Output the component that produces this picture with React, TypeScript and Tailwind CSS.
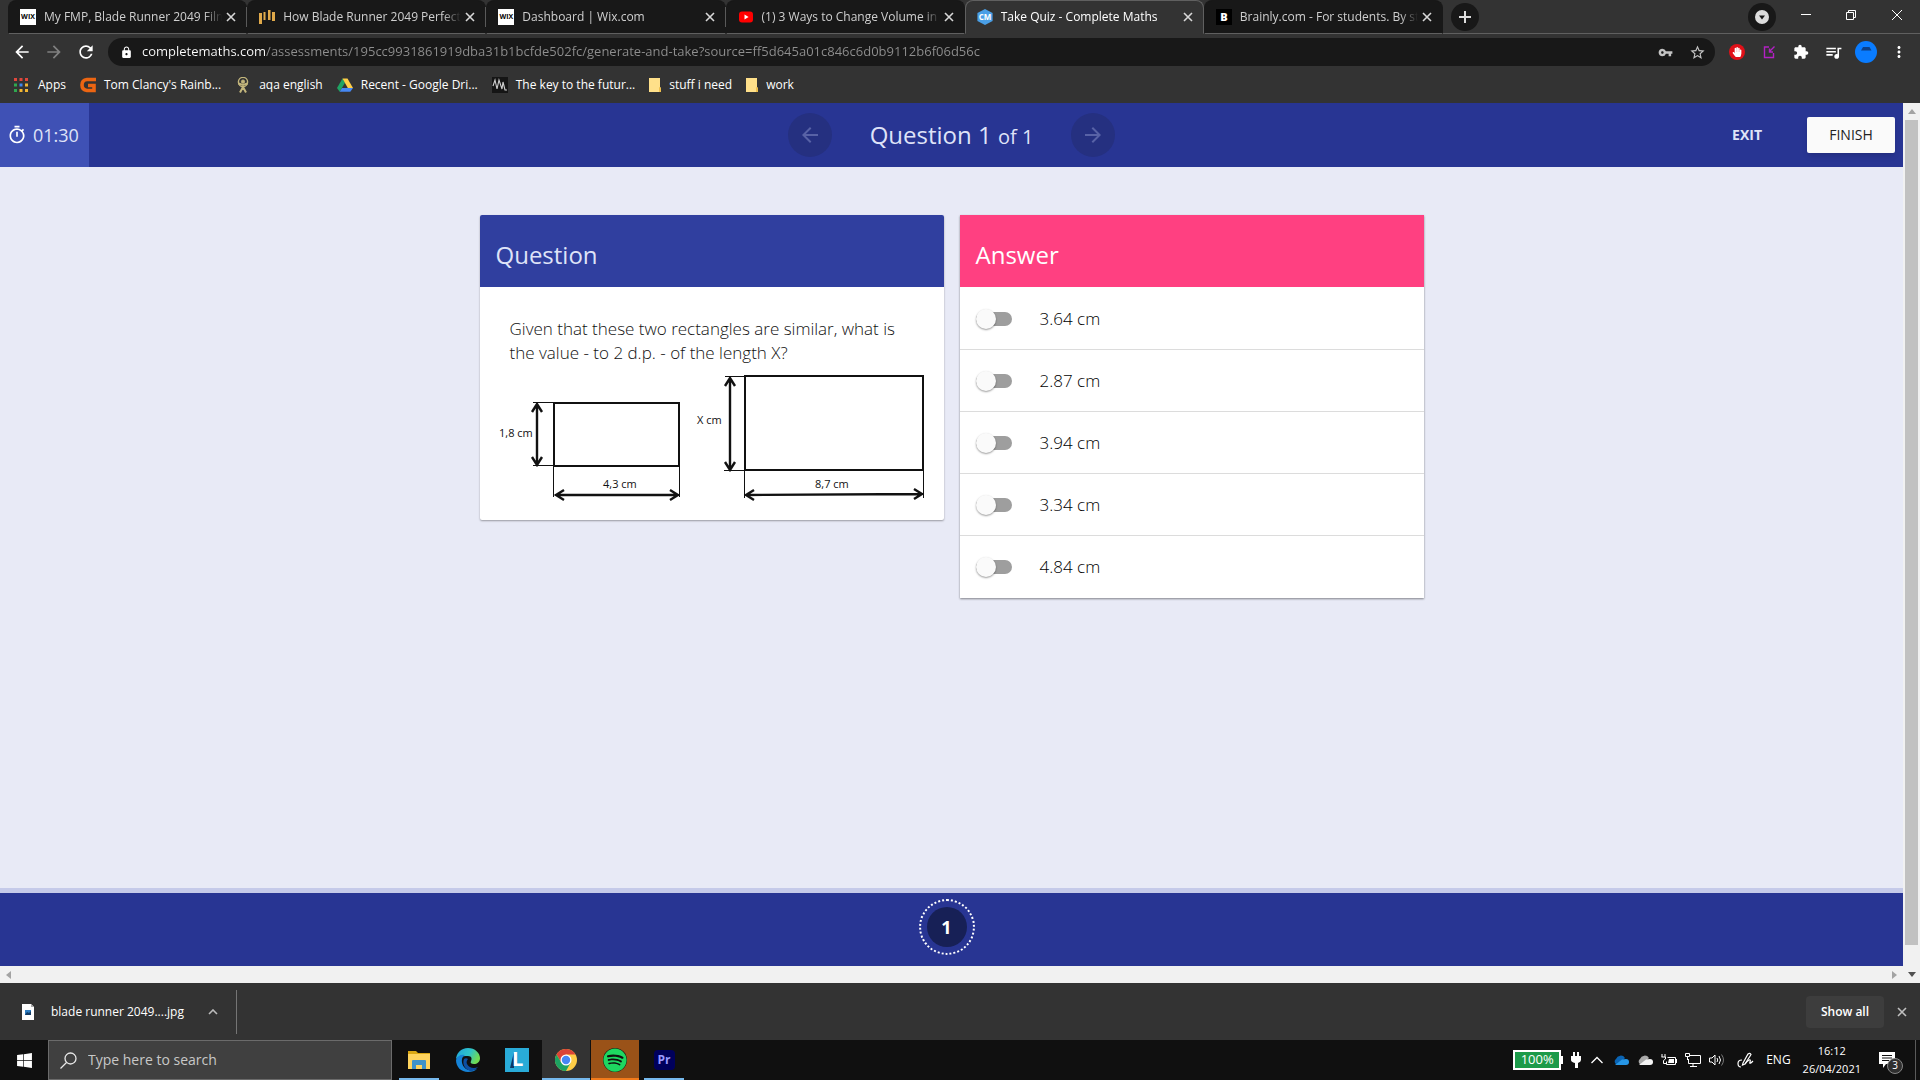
import clsx from "clsx";
import { FunctionComponent, JSX, ReactNode, useState } from "react";
import { FaHandPaper, FaSpotify, FaWindows } from "react-icons/fa";
import {
  MdArrowBack,
  MdArrowForward,
  MdExtension,
  MdLock,
  MdMoreVert,
  MdOutlineTimer,
  MdQueueMusic,
  MdRefresh,
  MdStarBorder,
  MdVpnKey,
} from "react-icons/md";

const ANSWERS = ["3.64 cm", "2.87 cm", "3.94 cm", "3.34 cm", "4.84 cm"];

const Cross: FunctionComponent<{ className?: string }> = ({
  className,
}): JSX.Element => (
  <svg
    viewBox="0 0 10 10"
    className={clsx("shrink-0", className)}
    fill="none"
    stroke="currentColor"
  >
    <path d="M1 1l8 8M9 1l-8 8" strokeWidth="1.6" />
  </svg>
);

const WixIcon = (): JSX.Element => (
  <span className="w-4 h-4 shrink-0 flex items-center justify-center bg-white text-black font-bold text-[7px]">
    WIX
  </span>
);

const BarsIcon = (): JSX.Element => (
  <svg viewBox="0 0 16 16" className="w-4 h-4 shrink-0" fill="#e0a94a">
    <path d="M0 4h3v11H0zM4.500 3h2v8h-2zM9 1h2.500v10H9zM13 3h3v9h-3z" />
  </svg>
);

const YoutubeIcon = (): JSX.Element => (
  <svg viewBox="0 0 16 16" className="w-4 h-4 shrink-0">
    <rect x="1" y="2.5" width="14" height="11" rx="3" fill="#f00" />
    <path d="M6.5 5.6v4.8L10.6 8z" fill="#fff" />
  </svg>
);

const MathsIcon = (): JSX.Element => (
  <svg viewBox="0 0 16 16" className="w-4 h-4 shrink-0">
    <path d="M8 0l7.6 4v8L8 16 .4 12V4z" fill="#4a9fe6" />
    <text
      x="8"
      y="11"
      textAnchor="middle"
      fontSize="8"
      fontWeight="700"
      fill="#fff"
      fontFamily="Open Sans, sans-serif"
    >
      CM
    </text>
  </svg>
);

const BrainlyIcon = (): JSX.Element => (
  <span className="w-4 h-4 shrink-0 flex items-center justify-center bg-black text-white font-black text-[11px]">
    B
  </span>
);

const TABS = [
  { title: "My FMP, Blade Runner 2049 Film", icon: <WixIcon /> },
  { title: "How Blade Runner 2049 Perfecte", icon: <BarsIcon /> },
  { title: "Dashboard | Wix.com", icon: <WixIcon /> },
  { title: "(1) 3 Ways to Change Volume in", icon: <YoutubeIcon /> },
  { title: "Take Quiz - Complete Maths", icon: <MathsIcon />, active: true },
  { title: "Brainly.com - For students. By stu", icon: <BrainlyIcon /> },
];

const TabStrip = (): JSX.Element => (
  <div className="w-full h-[34px] flex items-stretch bg-[#333] pl-2">
    <div className="flex min-w-0 basis-[1435px]">
      {TABS.map((tab, i) => (
        <div
          key={i}
          className={clsx(
            "flex flex-1 min-w-0 items-center rounded-t-lg pl-[11px] pr-[10px] text-xs border",
            tab.active
              ? "bg-[#333] border-[#606060] border-b-[#333] text-white"
              : "bg-[#181818] border-[#181818] border-b-[#606060] text-[#cfcfcf]"
          )}
        >
          {tab.icon}
          <span className="flex-1 min-w-0 ml-2 mr-1 overflow-hidden whitespace-nowrap [mask-image:linear-gradient(to_right,black_90%,transparent)]">
            {tab.title}
          </span>
          <button aria-label="Close tab" className="text-[#d8d8d8]">
            <Cross className="w-[10px] h-[10px]" />
          </button>
          {i < 3 && (
            <span className="w-px h-5 bg-[#5a5a5a] -mr-[11px] ml-[10px] shrink-0" />
          )}
        </div>
      ))}
    </div>
    <div className="flex flex-1 min-w-fit items-center border-b border-[#606060] text-white">
      <button
        aria-label="New tab"
        className="w-7 h-7 ml-2 rounded-full bg-[#181818] flex items-center justify-center"
      >
        <svg viewBox="0 0 12 12" className="w-3 h-3" stroke="#ddd">
          <path d="M6 0v12M0 6h12" strokeWidth="2" />
        </svg>
      </button>
      <button
        aria-label="Search tabs"
        className="w-7 h-7 ml-auto rounded-full bg-[#181818] flex items-center justify-center"
      >
        <svg viewBox="0 0 14 14" className="w-[14px] h-[14px]">
          <circle cx="7" cy="7" r="7" fill="#ddd" />
          <path d="M4 5.4h6L7 9.6z" fill="#181818" />
        </svg>
      </button>
      <button aria-label="Minimise" className="w-11 ml-2 flex justify-center pb-1">
        <span className="w-[10px] h-px bg-white" />
      </button>
      <button aria-label="Restore" className="w-[46px] flex justify-center pb-1">
        <svg viewBox="0 0 10 10" className="w-[10px] h-[10px]" fill="none" stroke="#fff">
          <path d="M.5 2.5h7v7h-7zM2.5 2.5v-2h7v7h-2" />
        </svg>
      </button>
      <button aria-label="Close" className="w-[46px] flex justify-center pb-1">
        <svg viewBox="0 0 10 10" className="w-[10px] h-[10px]" stroke="#fff">
          <path d="M0 0l10 10M10 0L0 10" />
        </svg>
      </button>
    </div>
  </div>
);

const Toolbar = (): JSX.Element => (
  <div className="w-full h-9 flex items-center bg-[#333] text-white pl-3 pr-3">
    <button aria-label="Back" className="w-8">
      <MdArrowBack size={20} />
    </button>
    <button aria-label="Forward" className="w-8 text-[#808080]">
      <MdArrowForward size={20} />
    </button>
    <button aria-label="Reload" className="w-8">
      <MdRefresh size={20} />
    </button>
    <div className="flex flex-1 min-w-0 items-center h-7 rounded-full bg-[#181818] pl-3 pr-[9px]">
      <MdLock size={13} className="shrink-0" />
      <input
        aria-label="Address"
        className="flex-1 min-w-0 ml-[9px] outline-none text-[13px] text-transparent bg-clip-text bg-[linear-gradient(to_right,#fff_124px,#8f8f8f_124px)]"
        defaultValue="completemaths.com/assessments/195cc9931861919dba31b1bcfde502fc/generate-and-take?source=ff5d645a01c846c6d0b9112b6f06d56c"
      />
      <MdVpnKey size={15} className="text-[#c4c4c4]" />
      <MdStarBorder size={17} className="ml-4 text-[#c4c4c4]" />
    </div>
    <div className="flex items-center shrink-0 ml-[14px] gap-4">
      <span className="w-4 h-4 rounded-full bg-[#e01018] flex items-center justify-center">
        <FaHandPaper size={10} />
      </span>
      <svg viewBox="0 0 16 16" className="w-4 h-4" fill="none" stroke="#b321c4" strokeWidth="1.4">
        <path d="M8 3H3.500v10.500h9V9M13.5 2.500L8.500 7.500M8.500 4.500v3.500h3.500" />
      </svg>
      <MdExtension size={16} />
      <MdQueueMusic size={19} className="-mx-px" />
      <span className="w-[22px] h-[22px] -mx-[3px] rounded-full bg-[#0a7cff] flex justify-center">
        <svg viewBox="0 0 22 22" className="w-[22px] h-[22px]">
          <path d="M8 6h6.500l2 3.500H6z" fill="#0d3f85" />
        </svg>
      </span>
      <MdMoreVert size={18} />
    </div>
  </div>
);

const AppsIcon = (): JSX.Element => (
  <svg viewBox="0 0 14 14" className="w-[14px] h-[14px]">
    <path d="M0 0h3v3H0zM5.5 0h3v3h-3zM11 0h3v3h-3z" fill="#e0473c" />
    <path d="M0 5.5h3v3H0z" fill="#2fa84f" />
    <path d="M5.5 5.5h3v3h-3z" fill="#3f86ee" />
    <path d="M11 5.5h3v3h-3zM5.5 11h3v3h-3zM11 11h3v3h-3z" fill="#f2b632" />
    <path d="M0 11h3v3H0z" fill="#2fa84f" />
  </svg>
);

const Folder = (): JSX.Element => (
  <svg viewBox="0 0 12 14" className="w-3 h-[14px]">
    <path d="M0 0h11v9l1 1v4H0z" fill="#ffe08a" />
    <path d="M10 9l2 1v4h-2z" fill="#eebf4d" />
  </svg>
);

const BOOKMARKS: { label: string; icon: ReactNode; className: string }[] = [
  { label: "Apps", icon: <AppsIcon />, className: "gap-[10px]" },
  {
    label: "Tom Clancy's Rainb...",
    icon: (
      <svg viewBox="0 0 16 16" className="w-4 h-4">
        <path
          d="M16 2.500H7Q2 3 2 8t5 5.500h7V8.500H8"
          fill="none"
          stroke="#ec6512"
          strokeWidth="3.6"
        />
      </svg>
    ),
    className: "gap-2",
  },
  {
    label: "aqa english",
    icon: (
      <svg viewBox="0 0 16 16" className="w-4 h-4" fill="none" stroke="#c3b67c">
        <circle cx="8" cy="5" r="4.6" strokeWidth="1.4" />
        <circle cx="8" cy="4.6" r="1.6" fill="#c3b67c" />
        <path d="M3.5 6.5L8 8l4.5-1.5M8 7v4M8 10l-3 5.5M8 10l3 5.5" strokeWidth="2" />
      </svg>
    ),
    className: "gap-2",
  },
  {
    label: "Recent - Google Dri...",
    icon: (
      <svg viewBox="0 0 16 16" className="w-4 h-4">
        <path d="M5.5 1.5L0 11l2.7 3.7L8 5.8z" fill="#1fa463" />
        <path d="M5.5 1.5h5L16 11h-5.2z" fill="#ffcf48" />
        <path d="M5 11h11l-2.7 3.7H2.7z" fill="#4688f4" />
      </svg>
    ),
    className: "gap-2",
  },
  {
    label: "The key to the futur...",
    icon: (
      <svg viewBox="0 0 16 16" className="w-4 h-4" fill="none" stroke="#d0d0d0">
        <rect width="16" height="16" fill="#151515" stroke="none" />
        <path d="M1 9l2-6 2 9 2-9 3 9 1-7 2 8h2" strokeWidth="1.1" />
      </svg>
    ),
    className: "gap-2",
  },
  { label: "stuff i need", icon: <Folder />, className: "gap-2" },
  { label: "work", icon: <Folder />, className: "gap-2" },
];

const Bookmarks = (): JSX.Element => (
  <div className="w-full h-[33px] flex items-center gap-[14px] bg-[#333] pl-[14px] pb-1 text-xs text-white">
    {BOOKMARKS.map((bookmark, i) => (
      <a
        key={i}
        href="#"
        className={clsx("flex items-center whitespace-nowrap", bookmark.className)}
      >
        {bookmark.icon}
        {bookmark.label}
      </a>
    ))}
  </div>
);

const QuizHeader = (): JSX.Element => (
  <header className="w-full h-16 grid grid-cols-[1fr_auto_1fr] items-center bg-[#283593] text-[#dfe3f8]">
    <div className="w-fit h-full flex items-center gap-[6px] bg-[#3f51b5] pl-[7px] pr-[10px] text-lg">
      <MdOutlineTimer size={20} className="text-white" />
      <span>01:30</span>
    </div>
    <div className="flex items-center gap-[38px]">
      <button
        aria-label="Previous question"
        className="w-11 h-11 rounded-full bg-[#253080] flex items-center justify-center text-[#5862a6]"
      >
        <MdArrowBack size={24} />
      </button>
      <h1 className="text-2xl whitespace-nowrap">
        Question 1 <span className="text-xl">of 1</span>
      </h1>
      <button
        aria-label="Next question"
        className="w-11 h-11 rounded-full bg-[#253080] flex items-center justify-center text-[#5862a6]"
      >
        <MdArrowForward size={24} />
      </button>
    </div>
    <div className="flex items-center justify-end gap-[45px] pr-2 text-sm">
      <button className="font-bold">EXIT</button>
      <button className="h-9 w-[88px] rounded-xs bg-[#fafafa] text-[#222] shadow-md">
        FINISH
      </button>
    </div>
  </header>
);

const Diagram = (): JSX.Element => (
  <svg
    viewBox="0 0 432 140"
    className="w-full"
    fill="none"
    stroke="#111"
    aria-label="Two similar rectangles"
  >
    <g strokeWidth="2">
      <rect x="58" y="38" width="125" height="63" />
      <rect x="249" y="11" width="178" height="94" />
    </g>
    <g strokeWidth="1">
      <path d="M37 37.5h20M37 100.5h20M57.5 101v31M183.5 101v31" />
      <path d="M229 11.5h20M228 105.5h20M248.5 105v28M427.5 105v28" />
    </g>
    <g strokeWidth="2.4">
      <path d="M41 40v59M36 47l5-8 5 8M36 92l5 8 5-8" />
      <path d="M60 130h122M68 125l-8 5 8 5M174 125l8 5-8 5" />
      <path d="M234 14v90M229 21l5-8 5 8M229 97l5 8 5-8" />
      <path d="M250 130l176-1M258 125l-8 5 8 5M418 124l8 5-8 5" />
    </g>
    <g
      stroke="none"
      fill="#111"
      fontSize="11"
      fontFamily="Open Sans, sans-serif"
    >
      <text x="3" y="72">1,8 cm</text>
      <text x="107" y="123">4,3 cm</text>
      <text x="201" y="59">X cm</text>
      <text x="319" y="123">8,7 cm</text>
    </g>
  </svg>
);

const QuestionCard = (): JSX.Element => (
  <section className="flex-1 min-w-0 rounded-xs overflow-hidden bg-white shadow-[0_1px_2px_rgba(0,0,0,0.35)]">
    <h2 className="h-[72px] flex items-center px-4 pt-2 bg-[#303f9f] text-2xl text-[#dfe3f8]">
      Question
    </h2>
    <div className="px-4 pt-[30px] pb-[15px] text-[#111]">
      <p className="px-[14px] font-light text-[17px] leading-6">
        Given that these two rectangles are similar, what is the value - to 2
        d.p. - of the length X?
      </p>
      <Diagram />
    </div>
  </section>
);

const AnswerCard = (): JSX.Element => {
  const [picked, setPicked] = useState<string[]>([]);
  return (
    <section className="flex-1 min-w-0 bg-white shadow-[0_1px_2px_rgba(0,0,0,0.45)]">
      <h2 className="h-[72px] flex items-center px-4 pt-2 bg-[#ff4081] text-2xl text-white">
        Answer
      </h2>
      <div className="pt-px divide-y divide-[#dcdcdc]">
        {ANSWERS.map((answer) => (
          <label
            key={answer}
            className="h-[62px] flex items-center gap-7 px-4 font-light text-[17px] leading-6 text-black"
          >
            <input
              type="checkbox"
              checked={picked.includes(answer)}
              onChange={() =>
                setPicked(
                  picked.includes(answer)
                    ? picked.filter((p) => p !== answer)
                    : [...picked, answer]
                )
              }
              className="relative appearance-none w-9 h-[14px] rounded-full bg-[#9e9e9e] checked:bg-[#ff80ab] before:absolute before:left-0 before:-top-[3px] before:w-5 before:h-5 before:rounded-full before:bg-[#fafafa] before:shadow-[0_1px_2px_rgba(0,0,0,0.4)] checked:before:left-4 checked:before:bg-[#ff4081]"
            />
            {answer}
          </label>
        ))}
      </div>
    </section>
  );
};

const Quiz = (): JSX.Element => (
  <div className="flex-1 w-full flex flex-row items-stretch">
    <div className="flex-1 min-w-0 flex flex-col">
      <QuizHeader />
      <main className="flex-1 bg-[#e8eaf6] pt-12 px-4">
        <div className="w-full max-w-[944px] mx-auto flex items-start gap-4">
          <QuestionCard />
          <AnswerCard />
        </div>
      </main>
      <footer className="h-[78px] flex justify-center border-t-[5px] border-[#c5cae9] bg-[#283593] pt-[6px] pr-[10px]">
        <button className="w-14 h-14 rounded-full border-2 border-dotted border-white flex items-center justify-center">
          <span className="w-10 h-10 rounded-full bg-[#172056] flex items-center justify-center text-white text-lg font-bold">
            1
          </span>
        </button>
      </footer>
      <div className="h-[17px] bg-[#f1f1f1] flex items-center justify-between px-[6px]">
        <svg viewBox="0 0 5 8" className="w-[5px] h-2" fill="#a3a3a3">
          <path d="M5 0v8L0 4z" />
        </svg>
        <svg viewBox="0 0 5 8" className="w-[5px] h-2" fill="#a3a3a3">
          <path d="M0 0v8l5-4z" />
        </svg>
      </div>
    </div>
    <div className="w-[17px] bg-[#f1f1f1] flex flex-col items-center">
      <div className="h-[17px] flex items-center">
        <svg viewBox="0 0 8 5" className="w-2 h-[5px]" fill="#a3a3a3">
          <path d="M0 5h8L4 0z" />
        </svg>
      </div>
      <div className="flex-1 w-[13px] bg-[#c1c1c1]" />
      <div className="h-[38px] flex items-end pb-[6px]">
        <svg viewBox="0 0 8 5" className="w-2 h-[5px]" fill="#505050">
          <path d="M0 0h8L4 5z" />
        </svg>
      </div>
    </div>
  </div>
);

const Downloads = (): JSX.Element => (
  <div className="w-full h-[57px] flex items-center bg-[#333] text-white pl-[22px] pr-[13px]">
    <svg viewBox="0 0 12 16" className="w-3 h-4">
      <path d="M0 0h9l3 3v13H0z" fill="#fff" />
      <path d="M9 0v3h3z" fill="#aaa" />
      <path d="M3 6h6v5H3z" fill="#2f7fc4" />
      <path d="M3 11l2-3 2 1 2-2v4z" fill="#153d66" />
    </svg>
    <span className="ml-[17px] text-xs">blade runner 2049....jpg</span>
    <button aria-label="Download options" className="ml-6">
      <svg viewBox="0 0 10 6" className="w-[10px] h-[6px]" fill="none" stroke="#bbb">
        <path d="M1 5l4-4 4 4" strokeWidth="1.6" />
      </svg>
    </button>
    <span className="w-px h-11 ml-[18px] bg-[#757575]" />
    <button className="ml-auto h-8 w-[78px] rounded bg-[#3d3d3d] text-xs font-semibold">
      Show all
    </button>
    <button aria-label="Close downloads" className="ml-[13px] text-[#c0c0c0]">
      <Cross className="w-[10px] h-[10px]" />
    </button>
  </div>
);

const ExplorerIcon = (): JSX.Element => (
  <svg viewBox="0 0 22 20" className="w-[22px] h-5">
    <path d="M0 1h8l2 2h12v16H0z" fill="#dba814" />
    <path d="M0 4h22v15H0z" fill="#ffd45e" />
    <path d="M4 19v-8q0-1 1-1h12q1 0 1 1v8h-4v-4H8v4z" fill="#3f93c9" />
  </svg>
);

const EdgeIcon = (): JSX.Element => (
  <svg viewBox="0 0 24 24" className="w-6 h-6">
    <defs>
      <linearGradient id="edgeTop" x1="0" y1="0" x2="1" y2="0.4">
        <stop offset="0" stopColor="#1fa3dd" />
        <stop offset="0.6" stopColor="#2fc4c8" />
        <stop offset="1" stopColor="#6fdc55" />
      </linearGradient>
    </defs>
    <path d="M0 12C0 5 5 0 12 0s12 5 12 10c0 4-3 6-6 6s-4-1-3-3 1-5-3-5C6 8 0 9 0 12z" fill="url(#edgeTop)" />
    <path d="M0 12C1 8 5 6 9 7c-4 2-4 8-1 12 3 4 8 4 13 2-2 2-5 3-9 3C5 24 0 19 0 12z" fill="#1583d8" />
    <path d="M8 11c-2 5 1 10 6 12 4 0 6-2 8-4-4 2-9 1-11-3-1-2 0-4 1-5-1-1-3-1-4 0z" fill="#0c4fa3" />
  </svg>
);

const LIcon = (): JSX.Element => (
  <svg viewBox="0 0 24 24" className="w-6 h-6">
    <rect width="24" height="24" fill="#29abd8" />
    <path d="M9 4v16H5z" fill="#0b3765" />
    <text
      x="7"
      y="18"
      fontSize="20"
      fontWeight="700"
      fill="#fff"
      fontFamily="Open Sans, sans-serif"
    >
      L
    </text>
  </svg>
);

const ChromeIcon = (): JSX.Element => (
  <svg viewBox="0 0 24 24" className="w-[22px] h-[22px]">
    <circle cx="12" cy="12" r="12" fill="#ffcd46" />
    <path d="M1.6 6A12 12 0 0 1 22.4 6H12l-5 9z" fill="#db4437" />
    <path d="M1.6 6A12 12 0 0 0 12 24l5-9H7z" fill="#1da362" />
    <circle cx="12" cy="12" r="6" fill="#fff" />
    <circle cx="12" cy="12" r="4.6" fill="#4687f4" />
  </svg>
);

const TASKS: { name: string; icon: ReactNode; className: string; line: string }[] = [
  { name: "File Explorer", icon: <ExplorerIcon />, className: "", line: "w-10 bg-[#76b9ed]" },
  { name: "Edge", icon: <EdgeIcon />, className: "", line: "w-0" },
  { name: "L", icon: <LIcon />, className: "", line: "w-0" },
  { name: "Chrome", icon: <ChromeIcon />, className: "bg-[#333]", line: "w-12 bg-[#76b9ed]" },
  {
    name: "Spotify",
    icon: (
      <span className="rounded-full bg-[#101010]">
        <FaSpotify size={24} className="text-[#1ed760]" />
      </span>
    ),
    className: "bg-[#9a5218]",
    line: "w-12 bg-[#f27a1a]",
  },
  {
    name: "Premiere Pro",
    icon: (
      <span className="w-[21px] h-5 rounded bg-[#00005b] flex items-center justify-center text-[#9999ff] text-xs font-bold">
        Pr
      </span>
    ),
    className: "",
    line: "w-10 bg-[#76b9ed]",
  },
];

const Cloud: FunctionComponent<{ top: string; bottom: string }> = ({
  top,
  bottom,
}): JSX.Element => (
  <svg viewBox="0 0 16 10" className="w-4 h-[10px]">
    <path d="M3 9a3 3 0 0 1 0-5 5 5 0 0 1 9-1l-6 6z" fill={top} />
    <path d="M2 10l7-5.5 4-.5a3 3 0 0 1 0 6z" fill={bottom} />
  </svg>
);

const Tray = (): JSX.Element => (
  <div className="ml-auto flex items-center text-white text-xs">
    <div className="h-5 w-12 border-2 border-white bg-[#1c9a49] flex items-center justify-center text-[13px]">
      100%
    </div>
    <span className="w-[2px] h-2 bg-white" />
    <svg viewBox="0 0 10 16" className="w-[10px] h-4 ml-2 mr-1" fill="#fff">
      <path d="M2 0h2v4h2V0h2v4h2v4q0 2-3 3v5H4v-5Q0 10 0 8V4h2z" />
    </svg>
    <div className="flex items-center *:w-6 *:flex *:justify-center">
      <span>
        <svg viewBox="0 0 12 8" className="w-3 h-2" fill="none" stroke="#fff">
          <path d="M.5 7L6 1.5 11.500 7" strokeWidth="1.3" />
        </svg>
      </span>
      <span>
        <Cloud top="#0a64b4" bottom="#2696e6" />
      </span>
      <span>
        <Cloud top="#a9a9a9" bottom="#f4f4f4" />
      </span>
      <span>
        <svg viewBox="0 0 16 12" className="w-4 h-3" fill="none" stroke="#fff">
          <path d="M1 0v3M4 0v3M.5 3h4v2l-2 1.500v3h3" />
          <path d="M6.500 3.500h8v7h-9v-3" />
          <path d="M8 5h5v4H7z" fill="#fff" stroke="none" />
          <path d="M15.500 5v4" />
        </svg>
      </span>
      <span>
        <svg viewBox="0 0 16 14" className="w-4 h-[14px]" fill="none" stroke="#fff">
          <path d="M5 2.500h10.500v8H3.500V6M8 10.500v3M5 13.500h7" />
          <path d="M.5.5h4v3h-4zM2.500 4v3" />
        </svg>
      </span>
      <span>
        <svg viewBox="0 0 16 14" className="w-4 h-[14px]" fill="none" stroke="#fff">
          <path d="M.5 5h2.500l3-3v10l-3-3H.5zM8 5q1.500 2 0 4M10 3q3 4 0 8" />
          <path d="M12.500 1.500q4 5.500 0 11" stroke="#777" />
        </svg>
      </span>
    </div>
    <svg viewBox="0 0 17 16" className="w-[17px] h-4 ml-2" fill="none" stroke="#fff" strokeWidth="1.2">
      <path d="M6 11L11 2q2-1.500 3 .5L8 12l-2.500 1zM5 8Q1 8 1 11.500t3 3.500" />
      <path d="M8 12q2-3 4-4t1 2 3-1" />
    </svg>
    <span className="ml-3">ENG</span>
    <div className="ml-3 flex flex-col items-center leading-[18px] text-[11px]">
      <span>16:12</span>
      <span>26/04/2021</span>
    </div>
    <div className="relative ml-[18px]">
      <svg viewBox="0 0 16 16" className="w-4 h-4">
        <path d="M0 0h16v12H7l-3 4v-4H0z" fill="#fff" />
        <path d="M3 3.500h10M3 6h10M3 8.500h7" stroke="#101010" />
      </svg>
      <span className="absolute left-2 top-[6px] w-4 h-4 rounded-full bg-[#2f2f2f] border border-[#888] flex items-center justify-center text-[10px]">
        3
      </span>
    </div>
    <span className="w-px h-10 ml-5 mr-1 bg-[#5a5a5a]" />
  </div>
);

const Taskbar = (): JSX.Element => (
  <div className="w-full h-10 flex items-stretch bg-[#101010]">
    <button
      aria-label="Start"
      className="w-12 flex items-center justify-center text-white"
    >
      <FaWindows size={17} />
    </button>
    <label className="w-[344px] flex items-center bg-[#404040] border border-[#6b6b6b] pl-[11px]">
      <svg viewBox="0 0 17 17" className="w-[17px] h-[17px]" fill="none" stroke="#e8e8e8">
        <circle cx="10.500" cy="6.500" r="5.500" strokeWidth="1.3" />
        <path d="M6.500 10.500L.5 16.500" strokeWidth="1.3" />
      </svg>
      <input
        type="text"
        aria-label="Search"
        placeholder="Type here to search"
        className="flex-1 min-w-0 ml-[11px] text-sm outline-none placeholder:text-[#c8c8c8]"
      />
    </label>
    <div className="flex items-stretch gap-px ml-[3px]">
      {TASKS.map((task) => (
        <button
          key={task.name}
          aria-label={task.name}
          className={clsx("relative w-12 flex items-center justify-center", task.className)}
        >
          {task.icon}
          <span className={clsx("absolute bottom-0 h-[2px]", task.line)} />
        </button>
      ))}
    </div>
    <Tray />
  </div>
);

const App: FunctionComponent = (): JSX.Element => {
  return (
    <div className="w-full min-h-screen flex flex-col font-['Open_Sans',sans-serif]">
      <TabStrip />
      <Toolbar />
      <Bookmarks />
      <Quiz />
      <Downloads />
      <Taskbar />
    </div>
  );
};

export default App;
